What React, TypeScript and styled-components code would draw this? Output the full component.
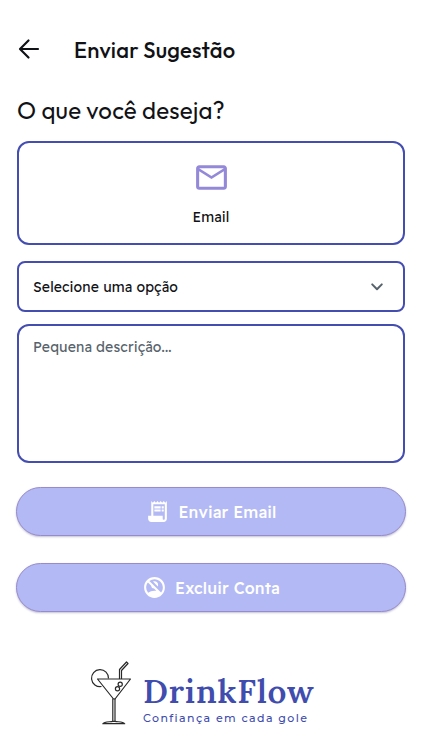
import React from "react";
import styled, { createGlobalStyle } from "styled-components";
import { MdMailOutline, MdReceiptLong, MdNoAccounts } from "react-icons/md";

const GlobalStyle = createGlobalStyle`
  *, *::before, *::after { box-sizing: border-box; }
  body { margin: 0; background: #fff; }
  button, textarea { font: inherit; margin: 0; }
`;

const Screen = styled.main`
  width: 422px;
  height: 750px;
  padding: 0 16px;
  overflow: hidden;
  display: flex;
  flex-direction: column;
  background: #fff;
  color: #111216;
  font-family: "Readex Pro", "Noto Sans", sans-serif;
  font-weight: 400;
`;

const Header = styled.header`
  display: flex;
  align-items: center;
  height: 40px;
  margin-top: 29px;
`;

const BackButton = styled.button`
  display: flex;
  width: 26px;
  height: 26px;
  padding: 0;
  border: 0;
  background: none;
  color: #111216;
`;

const Title = styled.h1`
  margin: 0 0 0 32px;
  padding-top: 1px;
  font: 500 22px/40px Outfit, Lato, sans-serif;
  letter-spacing: 0.18px;
  white-space: nowrap;
`;

const Question = styled.h2`
  margin: 21px 0 0 1px;
  height: 40px;
  font: 400 24px/40px Outfit, Lato, sans-serif;
  letter-spacing: 0.18px;
  white-space: nowrap;
`;

const Outlined = styled.div<{ $radius: number }>`
  margin: 0 1px;
  flex: none;
  border: 2px solid #444db0;
  border-radius: ${(p) => p.$radius}px;
`;

const ContactCard = styled(Outlined)`
  height: 104px;
  margin-top: 11px;
  padding-top: 16px;
  display: flex;
  flex-direction: column;
  align-items: center;
  color: #9489d8;
`;

const CardLabel = styled.span`
  margin-top: 10px;
  font-size: 14px;
  line-height: 22px;
  letter-spacing: 0.12px;
  color: #111216;
`;

const SelectField = styled(Outlined)`
  height: 51px;
  margin-top: 16px;
  padding: 0 19px 0 14px;
  display: flex;
  align-items: center;
  justify-content: space-between;
  font-size: 14px;
  letter-spacing: 0.12px;
  color: #111216;
`;

const Description = styled(Outlined)`
  display: block;
  height: 139px;
  margin-top: 12px;
  padding: 11px 14px;
  resize: none;
  outline: 0;
  background: #fff;
  font-size: 14px;
  line-height: 20px;
  letter-spacing: 0.12px;
  &::placeholder { color: #57636c; opacity: 1; }
`;

const Actions = styled.div`
  display: flex;
  flex-direction: column;
  gap: 27px;
  margin-top: 24px;
`;

const ActionButton = styled.button`
  height: 49px;
  padding: 0;
  display: flex;
  align-items: center;
  justify-content: center;
  gap: 8px;
  border: 1px solid #978bcb;
  border-radius: 25px;
  background: #b3b9f4;
  box-shadow: 0 1px 2px rgba(60, 50, 110, 0.3);
  color: #fff;
  font-size: 16px;
  font-weight: 500;
  line-height: 24px;
  letter-spacing: 0.13px;
`;

const Brand = styled.footer`
  display: flex;
  margin: 48px 0 0 74px;
`;

const Wordmark = styled.div`
  margin: 13px 0 0 3px;
  color: #404cae;
  white-space: nowrap;
`;

const BrandName = styled.div`
  height: 37px;
  font: 600 33px/37px Lora, "Liberation Serif", serif;
  letter-spacing: 0.85px;
`;

const Tagline = styled.div`
  font: 500 11px/16px Montserrat, Inter, sans-serif;
  letter-spacing: 1.4px;
`;

const BackIcon = () => (
  <svg width="26" height="26" viewBox="0 0 26 26" fill="none" stroke="currentColor" strokeWidth="2.2" strokeLinecap="round" strokeLinejoin="round">
    <path d="M22 13H4.5M12.5 4.500L4 13l8.500 8.500" />
  </svg>
);

const ChevronIcon = () => (
  <svg width="14" height="10" viewBox="0 0 14 10" fill="none" stroke="#57636c" strokeWidth="2" strokeLinecap="round" strokeLinejoin="round">
    <path d="M2.2 2.4L7 7.2l4.800-4.800" />
  </svg>
);

const CocktailIcon = () => (
  <svg width="50" height="68" viewBox="0 0 50 68" fill="none" stroke="#292929" strokeWidth="1.2" strokeLinejoin="round">
    <path d="M18.500 18.500A8.500 8.500 0 1 0 11.500 26.500" />
    <path d="M7.500 19H40.500L25 39H23.500L7.500 19Z" />
    <path d="M22.800 38.500V61.500M25 38.500V61.500" />
    <path d="M12.800 63.700C14 61.700 19 62 22.800 61.400H25C29 62 33.500 61.700 34.700 63.700Z" />
    <path d="M29.500 19V9.500L36.500 2L38 3.500L31.500 10.500V19" />
    <circle cx="30.200" cy="24.300" r="2.100" />
    <circle cx="27.500" cy="28.700" r="2.100" />
  </svg>
);

export default function App() {
  return (
    <>
      <GlobalStyle />
      <Screen>
        <Header>
          <BackButton aria-label="Voltar"><BackIcon /></BackButton>
          <Title>Enviar Sugestão</Title>
        </Header>
        <Question>O que você deseja?</Question>
        <ContactCard $radius={12}>
          <MdMailOutline size={37} />
          <CardLabel>Email</CardLabel>
        </ContactCard>
        <SelectField $radius={8}>
          <span>Selecione uma opção</span>
          <ChevronIcon />
        </SelectField>
        <Description as="textarea" $radius={12} placeholder="Pequena descrição..." />
        <Actions>
          <ActionButton>
            <MdReceiptLong size={25} />
            <span>Enviar Email</span>
          </ActionButton>
          <ActionButton>
            <MdNoAccounts size={25} />
            <span>Excluir Conta</span>
          </ActionButton>
        </Actions>
        <Brand>
          <CocktailIcon />
          <Wordmark>
            <BrandName>DrinkFlow</BrandName>
            <Tagline>Confiança em cada gole</Tagline>
          </Wordmark>
        </Brand>
      </Screen>
    </>
  );
}
